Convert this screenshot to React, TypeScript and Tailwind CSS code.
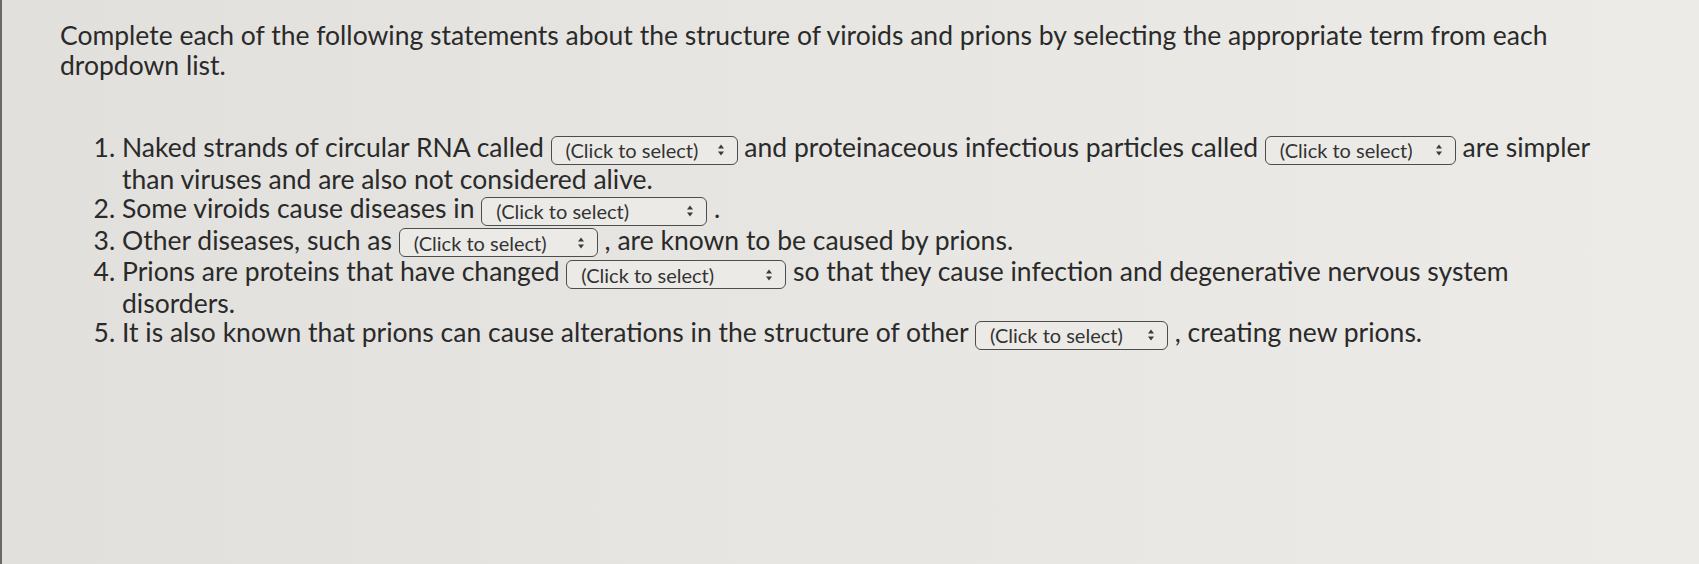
import React from "react";

function Arrows() {
  return (
    <svg width="8" height="14" viewBox="0 0 8 14" className="shrink-0">
      <path d="M4 1.5 L7 5.5 L1 5.5 Z" fill="#3a3a3a" />
      <path d="M4 12.5 L7 8.5 L1 8.5 Z" fill="#3a3a3a" />
    </svg>
  );
}

function Drop({ w }: { w: string }) {
  return (
    <span
      className={`inline-flex items-center justify-between align-middle h-[29px] border-[1.5px] border-[#4d4d4d] rounded-[6px] bg-[#eceae7] pl-[14px] pr-[12px] text-[20px] leading-none text-[#333] ${w}`}
    >
      <span>(Click to select)</span>
      <Arrows />
    </span>
  );
}

export default function App() {
  return (
    <div className="min-h-[564px] w-full border-l-2 border-[#6a6a6a] bg-linear-to-r from-[#e1e0dd] via-[#e7e6e3] to-[#ecebe8] pl-[58px] pt-[20px] font-['Lato',sans-serif] text-[#2a2a2a]">
      <p className="w-[1565px] text-[26.5px] leading-[30px]">
        Complete each of the following statements about the structure of viroids and prions by selecting the appropriate term from each dropdown list.
      </p>
      <ol className="mt-[53px] w-[1555px] list-decimal pl-[62px] text-[26.5px] leading-[29px]">
        <li>
          Naked strands of circular RNA called <Drop w="w-[187px]" /> and proteinaceous infectious particles called{" "}
          <Drop w="w-[191px]" /> are simpler than viruses and are also not considered alive.
        </li>
        <li>
          Some viroids cause diseases in <Drop w="w-[226px]" /> .
        </li>
        <li>
          Other diseases, such as <Drop w="w-[199px]" /> , are known to be caused by prions.
        </li>
        <li>
          Prions are proteins that have changed <Drop w="w-[220px]" /> so that they cause infection and degenerative nervous system disorders.
        </li>
        <li>
          It is also known that prions can cause alterations in the structure of other <Drop w="w-[193px]" /> , creating new prions.
        </li>
      </ol>
    </div>
  );
}
